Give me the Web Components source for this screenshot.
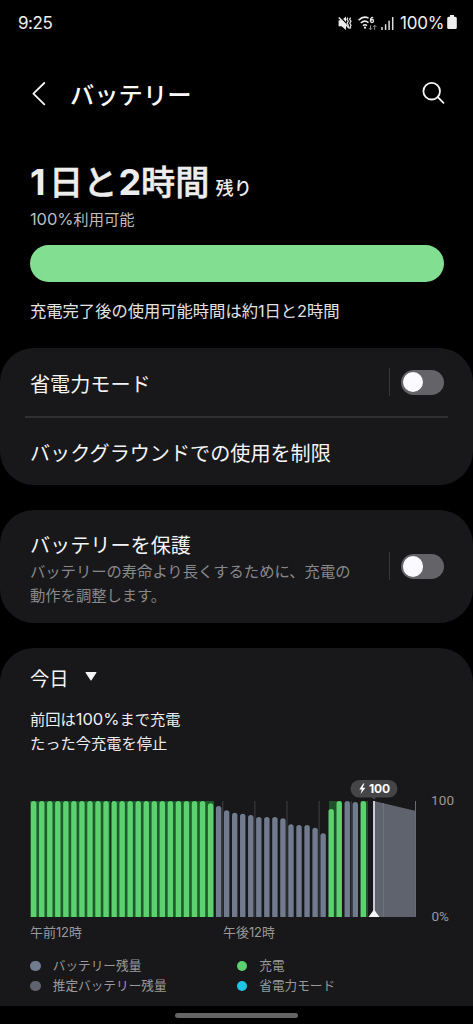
<!DOCTYPE html>
<html lang="ja">
<head>
<meta charset="utf-8">
<title>バッテリー</title>
<style>
html,body{margin:0;background:#000}
body{width:473px;height:1024px;overflow:hidden;font-family:Inter,"Noto Sans CJK JP",sans-serif;color:#f4f4f6}
</style>
</head>
<body>
<battery-screen></battery-screen>
<script>
const define = (name, html, setup) => customElements.define(name, class extends HTMLElement {
  constructor() {
    super();
    this.attachShadow({mode: 'open'}).innerHTML = html;
  }
  connectedCallback() { if (setup) setup(this, this.shadowRoot); }
});

define('status-bar', `
<style>
:host{display:flex;height:45px;box-sizing:border-box;padding:0 16px 0 18px;align-items:center;font:400 17px/20px Inter,sans-serif;color:#f0f0f0}
.time{flex:1;letter-spacing:-.45px}
.pct{letter-spacing:-.2px;width:47px;margin-left:5px;white-space:nowrap}
svg{display:block}
</style>
<span class="time">9:25</span>
<svg width="58" height="20" viewBox="337 12 58 20" fill="none" stroke="#ececec">
  <path d="M338.6 19.3h3l4.4-3.8v13.6l-4.4-3.8h-3z" fill="#ececec" stroke="none"/>
  <path d="M339.600 15.300l11 11.600" stroke="#000" stroke-width="1.400"/>
  <path d="M338.8 16.4l10.8 11.2" stroke-width="1.5"/>
  <path d="M347.9 16.6l-1 1.8 1.4 1.8-1.2 2 1.2 2-1 2M350.6 16.6l-1 1.8 1.4 1.8-1.2 2 1.2 2-1 2 1 1.2" stroke-width="1.2"/>
  <path d="M358.6 19.3c3-3.2 7-3.7 10-2.2M360.8 22c2.3-2.2 5.4-2.2 7.7-.3M363 24.6c1.2-1 2.8-1 4 0" stroke-width="1.5"/>
  <circle cx="365" cy="26.7" r="1.1" fill="#ececec" stroke="none"/>
  <path d="M373.2 16.6c-1.8-.5-2.8.8-2.8 3.1" stroke-width="1.3"/>
  <circle cx="372" cy="20" r="1.5" stroke-width="1.3"/>
  <path d="M370.5 24.2v4.6m-1.7-1.7l1.7 1.7 1.7-1.7M374.7 28.8v-4.6m-1.7 1.7l1.7-1.7 1.7 1.7" stroke="#8a8a8a" stroke-width="1"/>
  <path d="M382 26v3M385.6 23.2v5.8M389.1 19.8v9.200M392.7 16v13" stroke-width="1.5" stroke="#ddd"/>
</svg>
<span class="pct">100%</span>
<svg width="10" height="15" viewBox="0 0 10 15"><path d="M3 0h4v1.700h1.300q1.500 0 1.500 1.500v9.300q0 1.500-1.500 1.500h-6.600q-1.500 0-1.500-1.500v-9.300q0-1.500 1.500-1.500H3z" fill="#eee"/></svg>
`);

define('title-bar', `
<style>
:host{display:flex;height:97px;box-sizing:border-box;padding:0 28px 0 32px;align-items:center}
h1{margin:2.500px 0 0 24px;flex:1;font-size:24.3px;font-weight:500;line-height:36px;color:#fafafa}
svg{display:block}
</style>
<svg width="14" height="24" viewBox="0 0 14 24" fill="none" stroke="#f4f4f4" stroke-width="1.800" stroke-linecap="round" stroke-linejoin="round"><path d="M12.300 1L1.400 11.600l10.900 10.700"/></svg>
<h1><slot></slot></h1>
<svg width="23" height="23" viewBox="0 0 23 23" fill="none" stroke="#f6f6f6" stroke-width="1.800" stroke-linecap="round"><circle cx="9.700" cy="9.200" r="8.300"/><path d="M15.800 15.200l5.700 5.700"/></svg>
`);

define('battery-summary', `
<style>
:host{display:flex;flex-direction:column;height:205.500px;box-sizing:border-box;padding:16px 29.500px 0 30px}
.main{display:flex;align-items:baseline;height:48px;line-height:48px;font-size:34.200px;font-weight:500;-webkit-text-stroke:.5px #ededed;color:#ededed;white-space:nowrap}
.main .n{font-size:36px;font-weight:700;-webkit-text-stroke:0}
.main .n:first-child{margin-right:3.500px}
.main .two{margin-left:1px}
.main .rest{font-size:18.200px;font-weight:500;-webkit-text-stroke:0;margin-left:6px}
.sub{font-size:15.300px;line-height:24px;height:24px;margin-top:1.500px;color:#bdbdbf}
.sub span{font-size:16.500px;line-height:20px;letter-spacing:-.1px}
.bar{height:37px;border-radius:18.500px;background:#82de90;margin-top:13.500px}
.note{font-size:16.300px;line-height:24px;margin-top:17px;color:#e2e2e4;white-space:nowrap}
</style>
<div class="main"><span class="n">1</span>日と<span class="n two">2</span>時間<span class="rest">残り</span></div>
<div class="sub"><span>100%</span>利用可能</div>
<div class="bar"></div>
<div class="note">充電完了後の使用可能時間は約1日と2時間</div>
`);

define('settings-card', `
<style>
:host{display:block;background:#18181a;border-radius:34px;box-sizing:border-box;padding:0 25px;overflow:hidden}
</style><slot></slot>`);

define('toggle-switch', `
<style>
:host{display:flex;align-items:center;gap:11px}
i{width:1px;height:28px;background:#39393b}
b{display:flex;align-items:center;box-sizing:border-box;width:43.500px;height:25px;border-radius:13px;background:#646468;padding-left:2px}
b::before{content:"";width:20.500px;height:20.500px;border-radius:50%;background:#fbfbff}
</style><i></i><b></b>`);

define('setting-row', `
<style>
:host{display:flex;align-items:center;height:var(--row-height,69px);box-sizing:border-box;padding:0 4px 0 5px}
.t{flex:1;padding-top:var(--text-drop,5px);font-size:20.120px;line-height:28px;color:#f4f4f6;white-space:nowrap}
.d{font-size:15.300px;line-height:24px;color:#88888b}
</style>
<div class="t"><slot></slot><div class="d"><slot name="description"></slot></div></div>
<slot name="control"></slot>`);

define('row-divider', `<style>:host{display:block;height:2px;margin-top:-.5px;background:#303032}</style>`);

define('usage-chart', `
<style>
:host{display:block;margin:0 -25px}
svg{display:block}
text{font-family:Inter,"Noto Sans CJK JP",sans-serif}
.axis{font-family:Roboto,sans-serif}
</style>
<svg width="473" height="172" viewBox="0 772 473 172"></svg>`, (el, root) => {
  const tops = [...Array(22).fill(801), 803.3, 806, 810.2, 812.7, 813.7, 815, 817, 817, 817, 818.2, 824.2, 825, 825, 827.7, 833.3, 809, 801, 801, 802, 801];
  // The 23rd entry closes the overnight charge; the later green bars are short top-ups.
  const charging = i => i < 23 || [37, 38, 41].includes(i);
  const step = 8.04, base = 917;
  let s = '<rect x="30" y="801" width="184" height="116" fill="#1d5c2b"/><rect x="110.500" y="801" width="1.500" height="116" fill="#0b120e"/>';
  s += '<rect x="329" y="801" width="12.500" height="116" fill="#1f5229"/><rect x="360.500" y="801" width="7.500" height="116" fill="#1f5229"/>';
  for (const x of [222.7, 254.8, 287, 319.1, 351.3]) s += `<path d="M${x} 801V917" stroke="#37373a" stroke-width="1.300"/>`;
  tops.forEach((y, i) => {
    const x = 31 + i * step;
    s += `<path d="M${x} ${base}V${y + 2.6}a2.700 2.600 0 0 1 5.400 0V${base}z" fill="${charging(i) ? '#5dd070' : '#717b8e'}"/>`;
  });
  s += '<path d="M374 801l42 10v106H374z" fill="#5e636d"/><path d="M383.400 803V917" stroke="#717680" stroke-width="1"/><path d="M415.500 801v116" stroke="#666b74" stroke-width="1"/>';
  s += '<path d="M374 801v116" stroke="#c9cbd2" stroke-width="2"/><path d="M374 909.500l5.500 7.500h-11z" fill="#f5f5f7"/>';
  s += '<rect x="350.500" y="780" width="47" height="17.500" rx="8.750" fill="#454548"/><path d="M371.500 797h5l-2.500 2.500z" fill="#454548"/>';
  s += '<path d="M363.300 783.600l-4 5.800h2.500l-1.200 4.600 4.800-6.300h-2.800l1.800-4.100z" fill="#fff"/>';
  s += '<text x="369" y="793" font-size="12" font-weight="700" fill="#fff" textLength="21">100</text>';
  s += '<g fill="#99999c"><text class="axis" x="431" y="805" font-size="13.500" textLength="23">100</text><text class="axis" x="431.500" y="921" font-size="13.500">0%</text>';
  s += '<text x="30" y="937" font-size="13" textLength="52">午前12時</text><text x="223" y="937" font-size="13" textLength="52">午後12時</text></g>';
  root.querySelector('svg').innerHTML = s;
});

define('legend-item', `
<style>
:host{display:flex;align-items:center;height:20px;font-size:12.650px;line-height:20px;color:#9a9a9d;white-space:nowrap}
i{width:10.500px;height:10.500px;border-radius:50%;background:var(--dot);margin-right:12.300px}
</style><i></i><slot></slot>`);

define('usage-panel', `
<style>
:host{display:block}
.day{display:flex;align-items:center;height:28px;padding:16.500px 0 0 5px;font-size:19.300px}
.day svg{margin:-4px 0 0 16.500px}
.info{margin-top:16px;height:48px;padding-left:5px;font-size:15.250px;line-height:24px;color:#ededf0}
.info span{font-size:16.500px;line-height:20px}
usage-chart{margin-top:15.500px}
.legend{display:grid;grid-template-columns:206.500px 1fr;padding:12.500px 0 0 5px}
</style>
<div class="day">今日<svg width="12" height="9" viewBox="0 0 12 9"><path d="M1 0h10q.800 0 .400.800L6.500 8.200q-.500.600-1 0L.600.800Q.200 0 1 0z" fill="#f4f4f6"/></svg></div>
<div class="info">前回は<span>100%</span>まで充電<br>たった今充電を停止</div>
<usage-chart></usage-chart>
<div class="legend">
<legend-item style="--dot:#717b8e">バッテリー残量</legend-item><legend-item style="--dot:#5dd070">充電</legend-item>
<legend-item style="--dot:#5e636d">推定バッテリー残量</legend-item><legend-item style="--dot:#20c5e6">省電力モード</legend-item>
</div>`);

define('nav-handle', `
<style>:host{display:flex;height:18px;justify-content:center;align-items:center;background:#000}
i{width:122.500px;height:5px;border-radius:3px;background:#646466;margin-top:1px}</style><i></i>`);

define('battery-screen', `
<style>
:host{display:flex;flex-direction:column;width:473px;height:1024px;background:#000;overflow:hidden}
settings-card{flex:none;margin-bottom:25px}
.power{height:137.500px}
.protect{height:112.500px;--row-height:112.500px;--text-drop:7px}
.usage{height:358.500px;margin-bottom:0;border-radius:34px 34px 0 0}
</style>
<status-bar></status-bar>
<title-bar>バッテリー</title-bar>
<battery-summary></battery-summary>
<settings-card class="power">
<setting-row>省電力モード<toggle-switch slot="control"></toggle-switch></setting-row>
<row-divider></row-divider>
<setting-row style="--text-drop:2px">バックグラウンドでの使用を制限</setting-row>
</settings-card>
<settings-card class="protect">
<setting-row>バッテリーを保護<span slot="description">バッテリーの寿命より長くするために、充電の<br>動作を調整します。</span><toggle-switch slot="control"></toggle-switch></setting-row>
</settings-card>
<settings-card class="usage"><usage-panel></usage-panel></settings-card>
<nav-handle></nav-handle>
`);
</script>
</body>
</html>
